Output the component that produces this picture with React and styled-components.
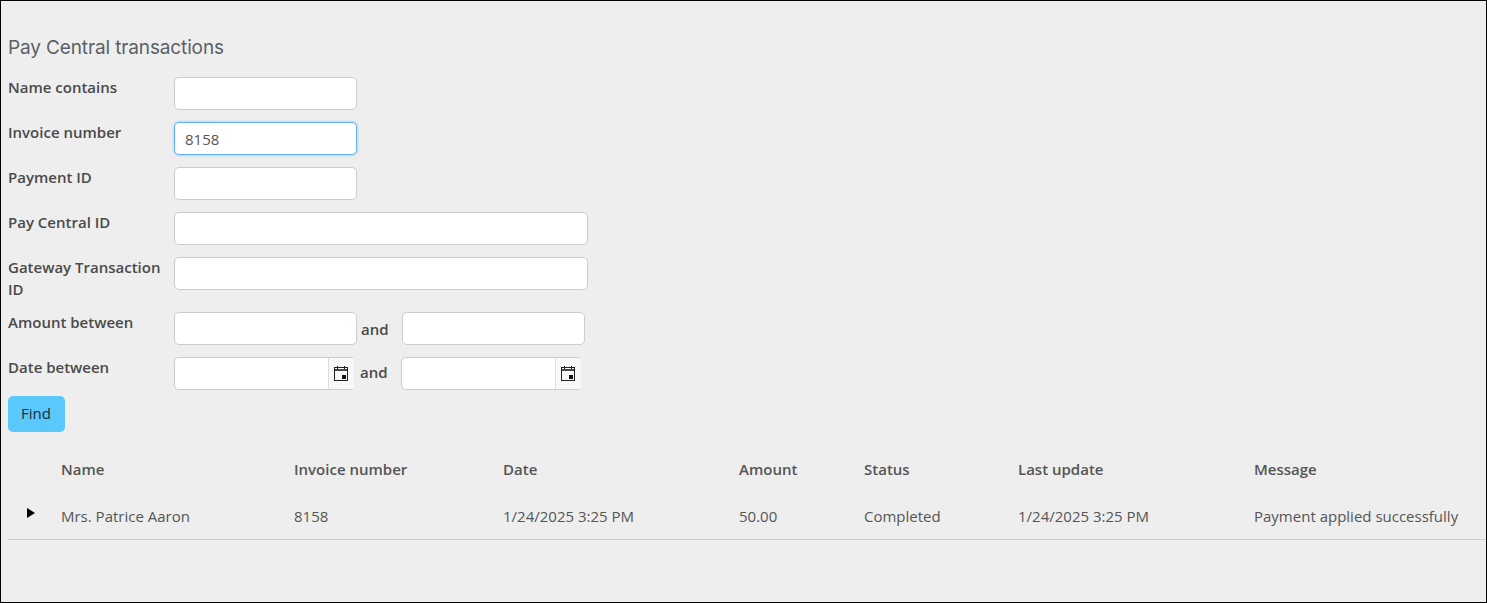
import styled, { createGlobalStyle } from 'styled-components';

const GlobalStyle = createGlobalStyle`
  html, body {
    margin: 0;
    padding: 0;
  }
  body {
    font-family: 'Open Sans', 'Liberation Sans', sans-serif;
    font-size: 15px;
    color: #555;
    background: #eeeeee;
  }
`;

const columns = [
  { key: 'name', label: 'Name', value: 'Mrs. Patrice Aaron' },
  { key: 'invoice', label: 'Invoice number', value: '8158' },
  { key: 'date', label: 'Date', value: '1/24/2025 3:25 PM' },
  { key: 'amount', label: 'Amount', value: '50.00' },
  { key: 'status', label: 'Status', value: 'Completed' },
  { key: 'update', label: 'Last update', value: '1/24/2025 3:25 PM' },
  { key: 'message', label: 'Message', value: 'Payment applied successfully' },
];

const CalendarIcon = () => (
  <svg width="14" height="15" viewBox="0 0 14 15" fill="none">
    <path d="M3.5 0v3M10.5 0v3" stroke="#111" strokeWidth="1" />
    <rect x="0.5" y="1.5" width="13" height="13" stroke="#222" />
    <path d="M0 4h14" stroke="#111" strokeWidth="1.4" />
    <rect x="8" y="9" width="4" height="4" fill="#111" />
  </svg>
);

const DateField = () => (
  <DateBox>
    <DateInput type="text" />
    <DateButton type="button">
      <CalendarIcon />
    </DateButton>
  </DateBox>
);

export default function App() {
  return (
    <>
      <GlobalStyle />
      <Page>
        <Title>Pay Central transactions</Title>
        <FormRow>
          <Label>Name contains</Label>
          <Input type="text" />
        </FormRow>
        <FormRow>
          <Label>Invoice number</Label>
          <Input type="text" defaultValue="8158" $focused />
        </FormRow>
        <FormRow>
          <Label>Payment ID</Label>
          <Input type="text" />
        </FormRow>
        <FormRow>
          <Label>Pay Central ID</Label>
          <Input type="text" $wide />
        </FormRow>
        <FormRow>
          <Label>Gateway Transaction ID</Label>
          <Input type="text" $wide />
        </FormRow>
        <FormRow>
          <Label>Amount between</Label>
          <Input type="text" />
          <AmountAnd>and</AmountAnd>
          <Input type="text" />
        </FormRow>
        <DateRow>
          <Label>Date between</Label>
          <DateField />
          <DateAnd>and</DateAnd>
          <DateField />
        </DateRow>
        <FindButton type="button">Find</FindButton>
        <ResultsTable>
          <thead>
            <tr>
              <ExpanderHead />
              {columns.map((c) => (
                <HeadCell key={c.key} $col={c.key}>
                  {c.label}
                </HeadCell>
              ))}
            </tr>
          </thead>
          <tbody>
            <tr>
              <ExpanderCell>
                <Arrow />
              </ExpanderCell>
              {columns.map((c) => (
                <BodyCell key={c.key}>{c.value}</BodyCell>
              ))}
            </tr>
          </tbody>
        </ResultsTable>
      </Page>
    </>
  );
}

const widths = {
  name: '233px',
  invoice: '209px',
  date: '236px',
  amount: '125px',
  status: '154px',
  update: '236px',
  message: 'auto',
};

const Page = styled.div`
  box-sizing: border-box;
  width: 1487px;
  height: 603px;
  border: 1px solid #000;
  padding: 36px 0 0 7px;
  overflow: hidden;
  background: #eeeeee;
`;

const Title = styled.h1`
  margin: 0 0 15px;
  height: 25px;
  font-family: 'Inter', 'Open Sans', sans-serif;
  font-size: 19px;
  font-weight: 400;
  line-height: 21px;
  letter-spacing: -0.13px;
  color: #5b5f66;
`;

const FormRow = styled.div`
  display: flex;
  align-items: flex-start;
  padding-bottom: 12px;
`;

const DateRow = styled(FormRow)`
  padding-bottom: 6px;
`;

const Label = styled.label`
  flex: 0 0 166px;
  box-sizing: border-box;
  margin-top: -1px;
  padding-right: 4px;
  font-size: 15px;
  font-weight: 600;
  line-height: 22px;
  color: #4a4a4a;
`;

const Input = styled.input`
  box-sizing: border-box;
  width: ${(p) => (p.$wide ? '414px' : '183px')};
  height: 33px;
  padding: 0 10px;
  border: 1px solid ${(p) => (p.$focused ? '#5cb3f5' : '#cccccc')};
  border-radius: 5px;
  background: #fff;
  box-shadow: ${(p) => (p.$focused ? '0 0 3px rgba(92, 179, 245, 0.7)' : 'none')};
  outline: none;
  font-family: inherit;
  font-size: 15px;
  color: #555;
`;

const AmountAnd = styled.span`
  width: 45px;
  box-sizing: border-box;
  padding: 6px 0 0 4px;
  font-weight: 600;
  line-height: 22px;
  color: #4a4a4a;
`;

const DateAnd = styled.span`
  width: 47px;
  box-sizing: border-box;
  padding: 4px 0 0 6px;
  font-weight: 600;
  line-height: 22px;
  color: #4a4a4a;
`;

const DateBox = styled.div`
  display: flex;
  box-sizing: border-box;
  width: 180px;
  height: 33px;
  border: 1px solid #cccccc;
  border-right: 0;
  border-radius: 5px 3px 3px 5px;
  background: #fff;
  overflow: hidden;
`;

const DateInput = styled.input`
  flex: 1;
  min-width: 0;
  border: 0;
  outline: none;
  background: transparent;
`;

const DateButton = styled.button`
  display: flex;
  align-items: center;
  justify-content: center;
  flex: 0 0 26px;
  padding: 0 2px 0 0;
  border: 0;
  border-left: 1px solid #dddddd;
  background: #f8f8f8;
`;

const FindButton = styled.button`
  display: block;
  width: 57px;
  height: 36px;
  padding: 0 1px 2px 0;
  border: 0;
  border-radius: 5px;
  background: #5bc8fb;
  font-family: inherit;
  font-size: 15px;
  font-weight: 400;
  color: #1e2b33;
`;

const ResultsTable = styled.table`
  width: 1479px;
  margin-top: 16px;
  border-collapse: collapse;
  table-layout: fixed;
`;

const ExpanderHead = styled.th`
  width: 53px;
  padding: 0;
`;

const HeadCell = styled.th`
  width: ${(p) => widths[p.$col]};
  height: 42px;
  padding: 0;
  text-align: left;
  font-size: 15px;
  font-weight: 600;
  color: #555;
`;

const ExpanderCell = styled.td`
  height: 49px;
  padding: 0 0 3px 19px;
  border-bottom: 1px solid #cccccc;
  box-sizing: border-box;
`;

const Arrow = styled.span`
  display: block;
  width: 0;
  height: 0;
  border-style: solid;
  border-width: 5px 0 5px 8.5px;
  border-color: transparent transparent transparent #000;
`;

const BodyCell = styled.td`
  padding: 4px 0 0;
  border-bottom: 1px solid #cccccc;
  font-size: 15px;
  color: #555;
  white-space: nowrap;
`;
